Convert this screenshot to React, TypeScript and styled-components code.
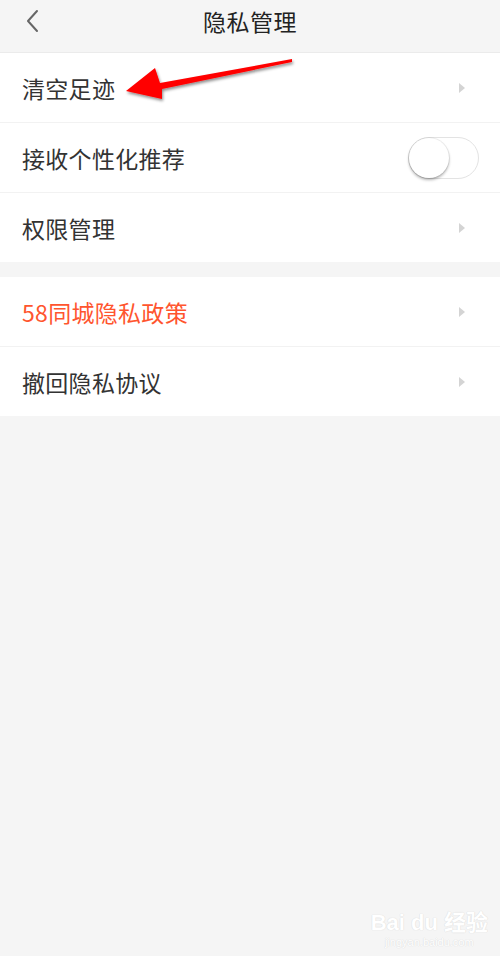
import React, { useState } from "react";
import styled, { createGlobalStyle } from "styled-components";

const GlobalStyle = createGlobalStyle`
  html, body {
    margin: 0;
    padding: 0;
    background: #f5f5f5;
  }
  body {
    font-family: "Noto Sans CJK SC", "Noto Sans", sans-serif;
  }
`;

const Page = styled.div`
  position: relative;
  width: 500px;
  height: 956px;
  background: #f5f5f5;
  overflow: hidden;
`;

const Header = styled.div`
  height: 52px;
  display: flex;
  align-items: center;
  justify-content: center;
  position: relative;
  border-bottom: 1px solid #ebebeb;
`;

const BackButton = styled.div`
  position: absolute;
  left: 20px;
  top: 8px;
  width: 24px;
  height: 26px;
  display: flex;
  align-items: center;
  justify-content: center;
`;

const Title = styled.div`
  font-size: 23px;
  color: #222;
  margin-top: -10px;
  letter-spacing: 0.5px;
`;

const Group = styled.div`
  background: #fff;
  margin-bottom: 15px;
`;

const Row = styled.div`
  height: 69px;
  display: flex;
  align-items: center;
  justify-content: space-between;
  padding: 0 22px;
  border-bottom: 1px solid #f2f2f2;
  &:last-child {
    border-bottom: none;
  }
`;

const Label = styled.span<{ $accent?: boolean }>`
  font-size: 23px;
  color: ${(p) => (p.$accent ? "#ff552e" : "#333")};
  letter-spacing: 0.3px;
`;

const Chevron = styled.span`
  width: 0;
  height: 0;
  margin-right: 13px;
  border-top: 5px solid transparent;
  border-bottom: 5px solid transparent;
  border-left: 6px solid #d4d4d4;
`;

const Toggle = styled.div<{ $on: boolean }>`
  position: relative;
  width: 69px;
  height: 40px;
  margin-right: -1px;
  border-radius: 21px;
  border: 1px solid #e3e3e3;
  background: ${(p) => (p.$on ? "#ff552e" : "#fff")};
  cursor: pointer;
`;

const Knob = styled.div<{ $on: boolean }>`
  position: absolute;
  top: 0;
  left: ${(p) => (p.$on ? "29px" : "0")};
  width: 40px;
  height: 40px;
  border-radius: 50%;
  background: #fff;
  box-shadow: 0 2px 3px rgba(0, 0, 0, 0.3), 0 0 0 1px rgba(0, 0, 0, 0.06);
`;

const Arrow = styled.svg`
  position: absolute;
  left: 118px;
  top: 56px;
  pointer-events: none;
`;

const Watermark = styled.div`
  position: absolute;
  right: 12px;
  bottom: 8px;
  display: flex;
  flex-direction: column;
  align-items: center;
  color: #fff;
  text-shadow: 0 0 1px #dcdcdc, 0 0 1px #dcdcdc;
  font-family: "Liberation Sans", "Noto Sans CJK SC", sans-serif;
`;

const MarkTop = styled.div`
  font-size: 22px;
  font-weight: bold;
  line-height: 26px;
`;

const MarkBottom = styled.div`
  font-size: 11px;
`;

export default function App() {
  const [recommend, setRecommend] = useState(false);
  return (
    <Page>
      <GlobalStyle />
      <Header>
        <BackButton>
          <svg width="14" height="24" viewBox="0 0 14 24">
            <path d="M12 2 L3 12 L12 22" fill="none" stroke="#666" strokeWidth="2" strokeLinecap="round" strokeLinejoin="round" />
          </svg>
        </BackButton>
        <Title>隐私管理</Title>
      </Header>
      <Group>
        <Row>
          <Label>清空足迹</Label>
          <Chevron />
        </Row>
        <Row>
          <Label>接收个性化推荐</Label>
          <Toggle $on={recommend} onClick={() => setRecommend(!recommend)}>
            <Knob $on={recommend} />
          </Toggle>
        </Row>
        <Row>
          <Label>权限管理</Label>
          <Chevron />
        </Row>
      </Group>
      <Group>
        <Row>
          <Label $accent>58同城隐私政策</Label>
          <Chevron />
        </Row>
        <Row>
          <Label>撤回隐私协议</Label>
          <Chevron />
        </Row>
      </Group>
      <Arrow width="190" height="56" viewBox="0 0 190 56">
        <defs>
          <filter id="sh" x="-10%" y="-30%" width="120%" height="160%">
            <feDropShadow dx="1" dy="2" stdDeviation="1.5" floodColor="#000" floodOpacity="0.45" />
          </filter>
        </defs>
        <path d="M174 3 L42 27 L37 12 L8 35 L44 43 L44 33 L174 6 Z" fill="#ff0000" filter="url(#sh)" />
      </Arrow>
      <Watermark>
        <MarkTop>Bai du 经验</MarkTop>
        <MarkBottom>jingyan.baidu.com</MarkBottom>
      </Watermark>
    </Page>
  );
}
